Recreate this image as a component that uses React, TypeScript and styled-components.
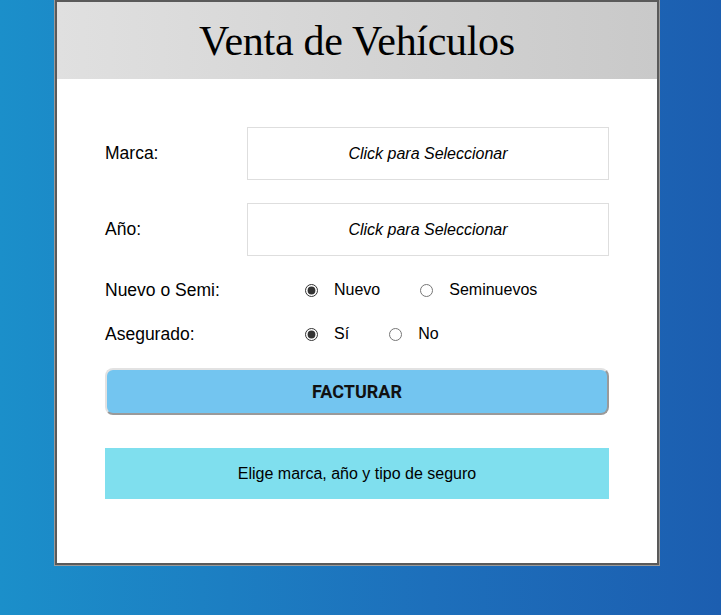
import React from 'react';
import styled, { createGlobalStyle } from 'styled-components';

const GlobalStyle = createGlobalStyle`
  html, body {
    margin: 0;
    padding: 0;
  }
  body {
    min-height: 615px;
    background: linear-gradient(to right, #1b8fca 0%, #1d6fbb 60%, #1c5eb0 100%);
    font-family: "Liberation Sans", Arial, sans-serif;
  }
`;

const Page = styled.div`
  width: 721px;
  height: 615px;
  overflow: hidden;
`;

const Card = styled.div`
  margin-left: 55px;
  width: 600px;
  background: #fff;
  border: 2px solid #5a5a5a;
  box-shadow: 0 0 0 1px #9a9a9a;
`;

const Header = styled.header`
  height: 77px;
  display: flex;
  align-items: center;
  justify-content: center;
  background: linear-gradient(to right, #e0e0e0, #c9c9c9);
`;

const Title = styled.h1`
  margin: 0;
  padding-top: 1px;
  font-family: "Liberation Serif", "Times New Roman", serif;
  font-weight: normal;
  font-size: 42px;
  letter-spacing: -0.3px;
  color: #000;
`;

const Body = styled.div`
  padding: 48px 48px 64px 48px;
`;

const SelectRow = styled.div`
  display: grid;
  grid-template-columns: 142px 362px;
  align-items: center;
  margin-bottom: 23px;
`;

const Label = styled.span`
  font-size: 17.5px;
  color: #000;
`;

const Picker = styled.button`
  height: 53px;
  background: #fff;
  border: 1px solid #dedede;
  font-family: "Liberation Sans", Arial, sans-serif;
  font-style: italic;
  font-size: 16px;
  color: #000;
  cursor: pointer;
`;

const RadioRow = styled.div<{ $top: number }>`
  display: grid;
  grid-template-columns: 200px auto;
  align-items: center;
  height: 22px;
  margin-top: ${(p) => p.$top}px;
`;

const Options = styled.div`
  display: flex;
  align-items: center;
  gap: 40px;
`;

const Option = styled.label`
  display: flex;
  align-items: center;
  gap: 16px;
  font-size: 16px;
  color: #000;

  input {
    margin: 0;
    width: 13px;
    height: 13px;
    accent-color: #333;
  }
`;

const Billing = styled.button`
  display: block;
  width: 504px;
  height: 47px;
  margin-top: 23px;
  background: #73c5f0;
  border: 2px solid;
  border-color: #e2e2e2 #9a9a9a #9a9a9a #e2e2e2;
  border-radius: 8px;
  font-family: Roboto, "Liberation Sans", Arial, sans-serif;
  font-weight: bold;
  font-size: 18px;
  color: #111;
  cursor: pointer;
`;

const Message = styled.div`
  margin-top: 33px;
  height: 51px;
  display: flex;
  align-items: center;
  justify-content: center;
  background: #7fdfee;
  font-size: 16px;
  color: #000;
`;

export default function App() {
  return (
    <Page>
      <GlobalStyle />
      <Card>
        <Header>
          <Title>Venta de Vehículos</Title>
        </Header>
        <Body>
          <SelectRow>
            <Label>Marca:</Label>
            <Picker>Click para Seleccionar</Picker>
          </SelectRow>
          <SelectRow>
            <Label>Año:</Label>
            <Picker>Click para Seleccionar</Picker>
          </SelectRow>
          <RadioRow $top={23}>
            <Label>Nuevo o Semi:</Label>
            <Options>
              <Option>
                <input type="radio" name="tipo" defaultChecked />
                Nuevo
              </Option>
              <Option>
                <input type="radio" name="tipo" />
                Seminuevos
              </Option>
            </Options>
          </RadioRow>
          <RadioRow $top={22}>
            <Label>Asegurado:</Label>
            <Options>
              <Option>
                <input type="radio" name="seguro" defaultChecked />
                Sí
              </Option>
              <Option>
                <input type="radio" name="seguro" />
                No
              </Option>
            </Options>
          </RadioRow>
          <Billing>FACTURAR</Billing>
          <Message>Elige marca, año y tipo de seguro</Message>
        </Body>
      </Card>
    </Page>
  );
}
